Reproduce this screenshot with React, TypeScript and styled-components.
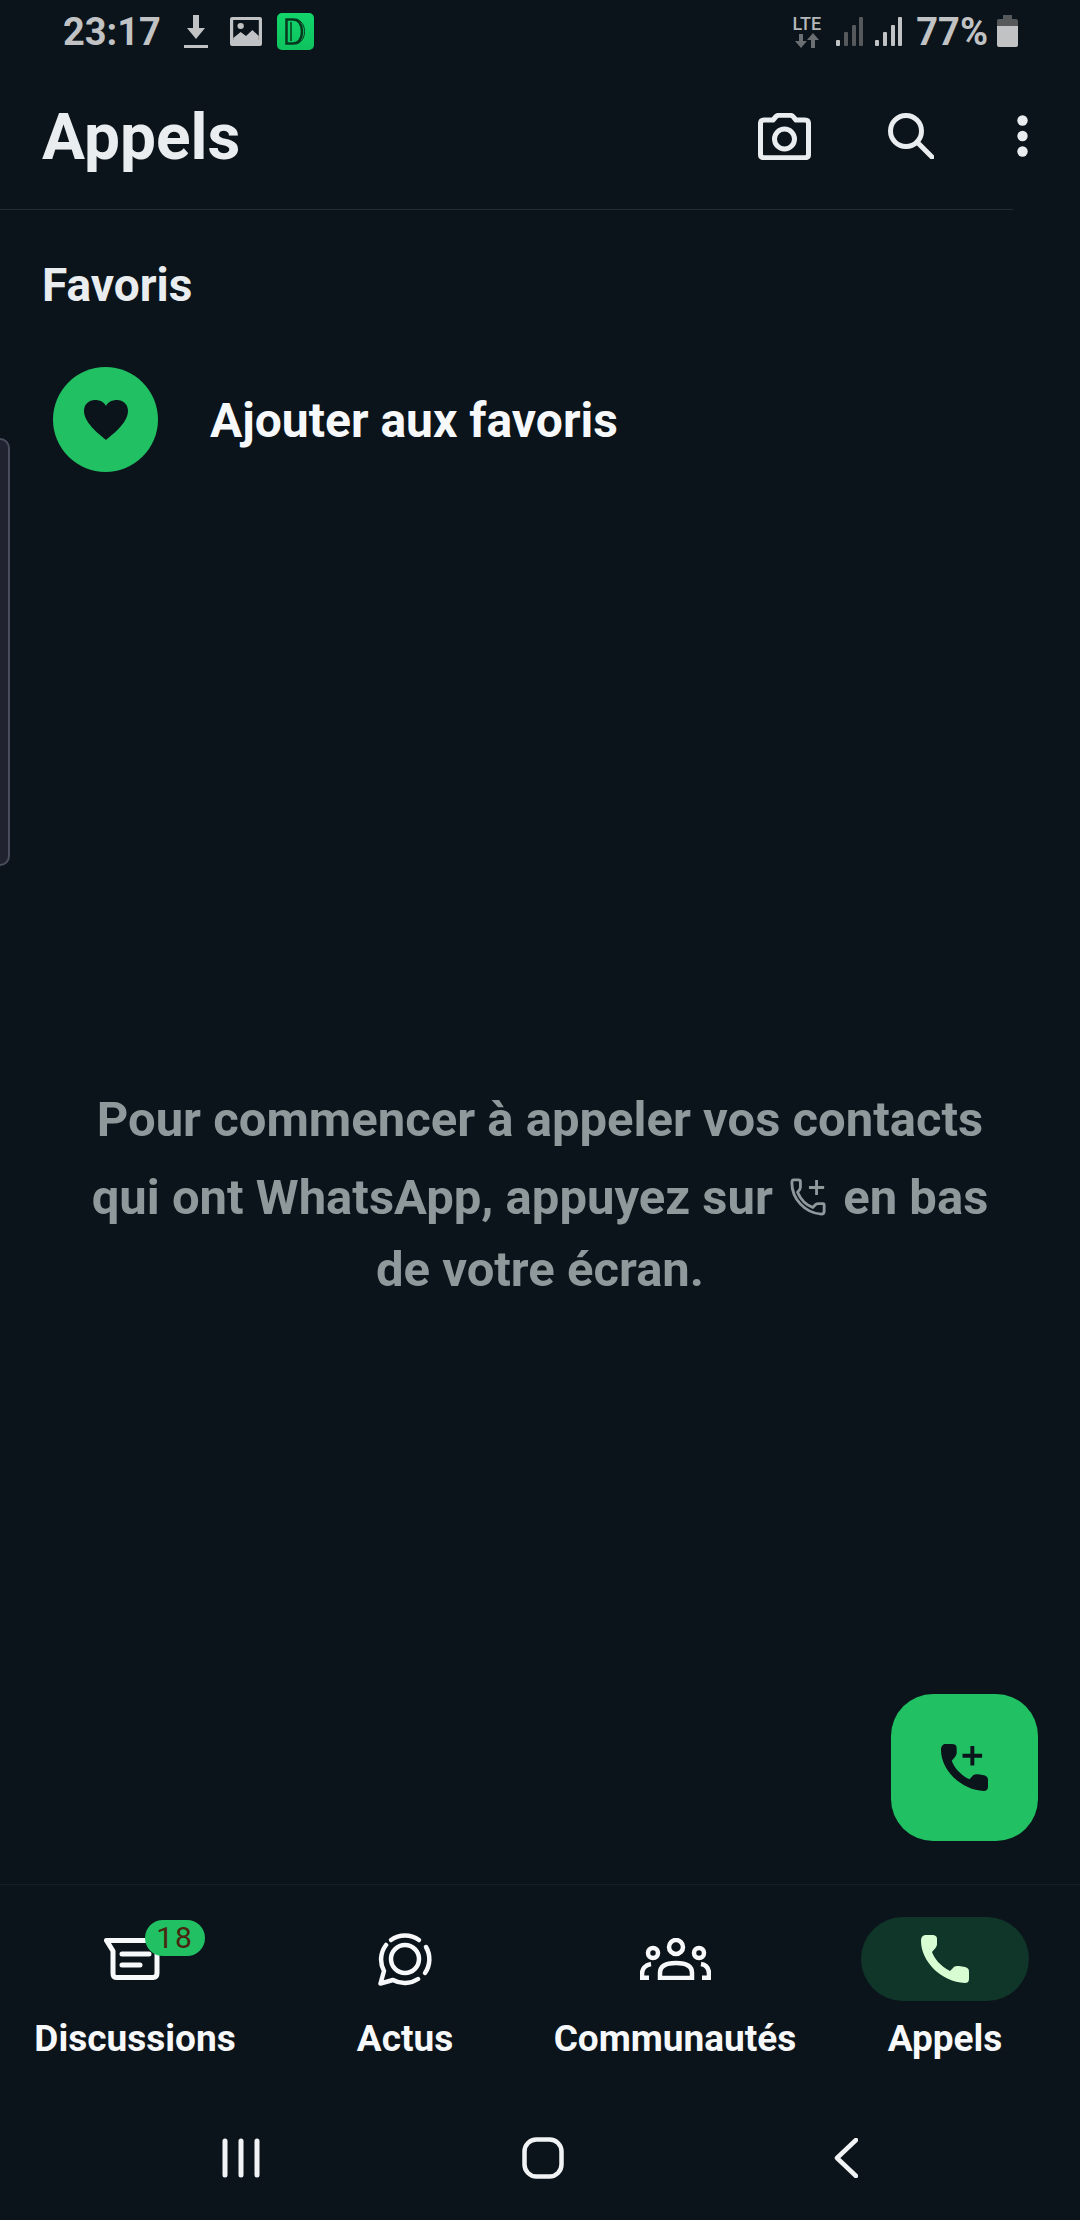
import styled, { createGlobalStyle } from 'styled-components';

const PHONE =
  'M5 0H11C14 0 16 1 16 4L16 9C16 11 15 13 11 17C13 23 19 31 29 36L32 33C33 31 36 31 38 31L44 32C47 33 48 34 48 37L48 44C48 47 46 48 44 48C20 47 0 26 0 6C0 2 2 0 5 0Z';

const GlobalStyle = createGlobalStyle`
  html, body {
    margin: 0;
    padding: 0;
    background: #0b141b;
  }
  * {
    box-sizing: border-box;
  }
`;

const Page = styled.div`
  position: relative;
  width: 1080px;
  height: 2220px;
  display: flex;
  flex-direction: column;
  overflow: hidden;
  background: #0b141b;
  font-family: Roboto, 'Liberation Sans', sans-serif;
`;

const StatusBar = styled.div`
  height: 62px;
  display: flex;
  align-items: center;
  padding: 0 62px 0 63px;
  color: #c0c2c4;
`;

const Time = styled.span`
  font-size: 38px;
  line-height: 46px;
  padding-top: 2px;
  font-weight: 700;
  margin-right: 23px;
`;

const StatusIcon = styled.svg<{ $gap?: number }>`
  display: block;
  flex: none;
  margin-right: ${(p) => p.$gap ?? 0}px;
`;

const DBadge = styled.div`
  width: 37px;
  height: 37px;
  border-radius: 5px;
  background: linear-gradient(#12d56c, #0fc35d);
  display: flex;
  align-items: center;
  justify-content: center;
`;

const StatusRight = styled.div`
  margin-left: auto;
  display: flex;
  align-items: center;
`;

const Lte = styled.div`
  width: 31px;
  margin-right: 14px;
  display: flex;
  flex-direction: column;
  align-items: center;
  gap: 1px;
  font-size: 18px;
  line-height: 17px;
  font-weight: 500;
  color: #b5b8ba;
`;

const Battery = styled.span`
  font-size: 38px;
  line-height: 46px;
  padding-top: 2px;
  font-weight: 700;
  margin: 0 9px 0 14px;
`;

const Header = styled.header`
  position: relative;
  height: 148px;
  display: flex;
  align-items: center;
  padding: 0 52px 0 41px;
  &::after {
    content: '';
    position: absolute;
    left: 0;
    bottom: 0;
    width: 1013px;
    height: 1px;
    background: #232c32;
  }
`;

const Title = styled.h1`
  margin: 3px auto 0 1px;
  font-size: 64px;
  font-weight: 700;
  color: #e9edef;
`;

const HeaderIcon = styled.svg<{ $gap: number }>`
  display: block;
  flex: none;
  margin-right: ${(p) => p.$gap}px;
  color: #e9edef;
`;

const SectionTitle = styled.h2`
  margin: 49px 0 0 42px;
  font-size: 46px;
  line-height: 52px;
  font-weight: 700;
  color: #e9edef;
`;

const FavoriteRow = styled.div`
  margin: 56px 0 0 53px;
  display: flex;
  align-items: center;
  gap: 51px;
`;

const FavoriteCircle = styled.div`
  width: 105px;
  height: 105px;
  border-radius: 50%;
  background: #21c063;
  display: flex;
  align-items: center;
  justify-content: center;
`;

const FavoriteLabel = styled.span`
  font-size: 48px;
  padding-top: 2px;
  margin-left: 1px;
  font-weight: 700;
  color: #f7f8fa;
`;

const EmptyText = styled.p`
  margin: 612px 0 0;
  font-size: 49px;
  line-height: 72px;
  font-weight: 700;
  text-align: center;
  color: #8f989b;
`;

const EmptyLine = styled.span`
  display: block;
`;

/* the top margin opens line two a little, as the inline icon does in the app */
const InlineIcon = styled.svg`
  display: inline-block;
  vertical-align: -2px;
  margin: 22px 4px 0;
`;

const SideHandle = styled.div`
  position: absolute;
  left: -10px;
  top: 438px;
  width: 20px;
  height: 428px;
  border: 2px solid #4a4d5c;
  border-radius: 10px;
  background: #20232f;
`;

const Fab = styled.div`
  position: absolute;
  left: 891px;
  top: 1694px;
  width: 147px;
  height: 147px;
  border-radius: 42px;
  background: #21c063;
  display: flex;
  align-items: center;
  justify-content: center;
`;

const BottomNav = styled.nav`
  margin-top: auto;
  display: grid;
  grid-template-columns: repeat(4, 270px);
  height: 211px;
  border-top: 1px solid #151e24;
`;

const NavItem = styled.div`
  display: flex;
  flex-direction: column;
  align-items: center;
  padding-top: 32px;
`;

const IconSlot = styled.div<{ $active?: boolean }>`
  position: relative;
  width: 168px;
  height: 84px;
  border-radius: 42px;
  display: flex;
  align-items: center;
  justify-content: center;
  color: #f7f8fa;
  background: ${(p) => (p.$active ? '#103529' : 'transparent')};
`;

const NavBadge = styled.span`
  position: absolute;
  left: 94px;
  top: 3px;
  width: 60px;
  height: 36px;
  border-radius: 18px;
  background: #21c063;
  color: #4a2510;
  font-size: 30px;
  line-height: 36px;
  letter-spacing: 2px;
  text-align: center;
`;

const NavLabel = styled.span`
  margin-top: 16px;
  font-size: 37px;
  line-height: 44px;
  font-weight: 700;
  color: #f7f8fa;
  white-space: nowrap;
`;

const GestureBar = styled.div`
  height: 125px;
  display: flex;
  align-items: center;
  color: #f1f3f4;
  padding-left: 222px;
`;

const GestureIcon = styled.svg<{ $gap: number }>`
  display: block;
  flex: none;
  margin-right: ${(p) => p.$gap}px;
`;

const App = () => (
  <Page>
    <GlobalStyle />
    <StatusBar>
      <Time>23:17</Time>
      <StatusIcon width="24" height="33" viewBox="0 0 24 33" $gap={22}>
        <path d="M9 0h6v13h6L12 24 3 13h6z" fill="currentColor" />
        <rect y="30" width="24" height="3" fill="currentColor" />
      </StatusIcon>
      <StatusIcon width="32" height="29" viewBox="0 0 30 29" preserveAspectRatio="none" $gap={15}>
        <rect width="30" height="29" rx="2" fill="currentColor" />
        <rect x="3" y="3" width="24" height="20" fill="#0b141b" />
        <circle cx="10" cy="9" r="3" fill="currentColor" />
        <path d="M3 25V21l7-6 5 4 6-6 6 6v6z" fill="currentColor" />
      </StatusIcon>
      <DBadge>
        <svg width="20" height="27" viewBox="0 0 20 27" fill="none" stroke="#06371f">
          <path d="M1.5 1.5H8C14 1.500 17 7 17 13.500S14 25.500 8 25.500H1.500Z" strokeWidth="2.500" />
          <path d="M6 4V23" strokeWidth="1.500" />
          <path d="M11 1C16 2 19.500 7 19.500 13.500S16 25 11 26" strokeWidth="1" />
        </svg>
      </DBadge>
      <StatusRight>
        <Lte>
          LTE
          <svg width="24" height="15" viewBox="0 0 24 15" fill="#6b6f72">
            <path d="M6 15L0 8h4V1h4v7h4zM18 0l6 7h-4v8h-4V7h-4z" />
          </svg>
        </Lte>
        <StatusIcon width="27" height="29" viewBox="0 0 27 29" $gap={12}>
          <rect y="23" width="4" height="6" rx="1" fill="#c0c2c4" />
          <rect x="8" y="15" width="4" height="14" rx="1" fill="#55595c" />
          <rect x="16" y="8" width="4" height="21" rx="1" fill="#55595c" />
          <rect x="23" y="0" width="4" height="29" rx="1" fill="#55595c" />
        </StatusIcon>
        <StatusIcon width="27" height="29" viewBox="0 0 27 29">
          <rect y="23" width="4" height="6" rx="1" fill="#c0c2c4" />
          <rect x="8" y="15" width="4" height="14" rx="1" fill="#c0c2c4" />
          <rect x="16" y="8" width="4" height="21" rx="1" fill="#c0c2c4" />
          <rect x="23" y="0" width="4" height="29" rx="1" fill="#c0c2c4" />
        </StatusIcon>
        <Battery>77%</Battery>
        <StatusIcon width="21" height="32" viewBox="0 0 21 32">
          <path d="M6 0h9v4h4a2 2 0 0 1 2 2v5H0V6a2 2 0 0 1 2-2h4z" fill="#55595c" />
          <path d="M0 11h21v19a2 2 0 0 1-2 2H2a2 2 0 0 1-2-2z" fill="#c0c2c4" />
        </StatusIcon>
      </StatusRight>
    </StatusBar>

    <Header>
      <Title>Appels</Title>
      <HeaderIcon width="53" height="47" viewBox="0 0 53 47" fill="none" stroke="currentColor" strokeWidth="5" $gap={77}>
        <path
          d="M2.500 10.500Q2.500 7 6 7H15L18 3.500Q19 2.300 21 2.300H32Q34 2.300 35 3.500L38 7H47Q50.500 7 50.500 10.500V41.500Q50.500 44.700 47 44.700H6Q2.500 44.700 2.500 41.500Z"
          strokeLinejoin="round"
        />
        <circle cx="26.500" cy="26" r="10" />
      </HeaderIcon>
      <HeaderIcon width="46" height="46" viewBox="0 0 46 46" fill="none" stroke="currentColor" strokeWidth="5" strokeLinecap="round" $gap={83}>
        <circle cx="18" cy="18" r="15.500" />
        <path d="M29 29L44 44" />
      </HeaderIcon>
      <HeaderIcon width="11" height="42" viewBox="0 0 11 42" fill="currentColor" $gap={0}>
        <circle cx="5.500" cy="5.500" r="5.200" />
        <circle cx="5.500" cy="21" r="5.200" />
        <circle cx="5.500" cy="36.500" r="5.200" />
      </HeaderIcon>
    </Header>

    <SectionTitle>Favoris</SectionTitle>
    <FavoriteRow>
      <FavoriteCircle>
        <svg width="44" height="40" viewBox="0 0 44 40">
          <path
            d="M22 40C19 37 0 24 0 11C0 4 5 0 11 0C16 0 20 2 22 6C24 2 28 0 33 0C39 0 44 4 44 11C44 24 25 37 22 40Z"
            fill="#0b141b"
          />
        </svg>
      </FavoriteCircle>
      <FavoriteLabel>Ajouter aux favoris</FavoriteLabel>
    </FavoriteRow>

    <EmptyText>
      <EmptyLine>Pour commencer à appeler vos contacts</EmptyLine>
      <EmptyLine>
        qui ont WhatsApp, appuyez sur{' '}
        <InlineIcon width="38" height="38" viewBox="0 0 38 40" fill="none" stroke="#8f989b" strokeWidth="3">
          <path
            d="M4 2H9Q11 2 11 4V10Q11 12 8 15C11 22 16 28 24 31L27 28Q28 27 30 27H35Q36 27 36 29V35Q36 38 33 38C16 37 2 22 2 5Q2 2 4 2Z"
            strokeLinejoin="round"
          />
          <path d="M28 2V18M20 10H36" />
        </InlineIcon>{' '}
        en bas
      </EmptyLine>
      <EmptyLine>de votre écran.</EmptyLine>
    </EmptyText>

    <SideHandle />

    <Fab>
      <svg width="47" height="47" viewBox="0 0 48 48" fill="#0b141b">
        <path d={PHONE} />
        <path d="M30 3h4v8h8v4h-8v8h-4v-8h-8v-4h8z" transform="translate(0 -1)" />
      </svg>
    </Fab>

    <BottomNav>
      <NavItem>
        <IconSlot>
          <svg width="62" height="42" viewBox="0 0 62 42" fill="none" stroke="currentColor" strokeWidth="5" strokeLinecap="round" strokeLinejoin="round">
            <path d="M2.500 2.500H53V35Q53 39.500 49 39.500H12Q9 39.500 9 35V13Z" />
            <path d="M18 16H45M18 27H36" />
          </svg>
          <NavBadge>18</NavBadge>
        </IconSlot>
        <NavLabel>Discussions</NavLabel>
      </NavItem>
      <NavItem>
        <IconSlot>
          <svg width="54" height="53" viewBox="0 0 54 53" fill="none" stroke="currentColor" strokeWidth="4.500" strokeLinecap="round" strokeLinejoin="round">
            <circle cx="27" cy="26" r="14" />
            <path d="M13 7A24 24 0 0 1 41 7" />
            <path d="M48 14A24 24 0 0 1 47 40" />
            <path d="M8 12A24 24 0 0 0 6 38L2.500 50.500L15 47A24 24 0 0 0 40 46" />
          </svg>
        </IconSlot>
        <NavLabel>Actus</NavLabel>
      </NavItem>
      <NavItem>
        <IconSlot>
          <svg width="71" height="42" viewBox="0 0 71 42" fill="none" stroke="currentColor" strokeWidth="4.500">
            <circle cx="36" cy="9" r="7" />
            <circle cx="13" cy="15" r="5" />
            <circle cx="59" cy="15" r="5" />
            <path d="M20 40V35C20 28 26 25 36 25S52 28 52 35V40Z" />
            <path d="M11 26C5 27 2 31 2 36V42" />
            <path d="M2 39.800H9M62 39.800H69" />
            <path d="M61 26C67 27 69 31 69 36V42" />
          </svg>
        </IconSlot>
        <NavLabel>Communautés</NavLabel>
      </NavItem>
      <NavItem>
        <IconSlot $active>
          <svg width="48" height="48" viewBox="0 0 48 48" fill="#d8fdd2">
            <path d={PHONE} />
          </svg>
        </IconSlot>
        <NavLabel>Appels</NavLabel>
      </NavItem>
    </BottomNav>

    <GestureBar>
      <GestureIcon width="38" height="40" viewBox="0 0 38 40" stroke="currentColor" strokeWidth="5" strokeLinecap="round" $gap={262}>
        <path d="M3 3V37M19 3V37M35 3V37" />
      </GestureIcon>
      <GestureIcon width="42" height="42" viewBox="0 0 42 42" fill="none" stroke="currentColor" strokeWidth="4.500" $gap={270}>
        <rect x="2.500" y="2.500" width="37" height="37" rx="12" />
      </GestureIcon>
      <GestureIcon width="24" height="40" viewBox="0 0 24 40" fill="none" stroke="currentColor" strokeWidth="4.500" strokeLinecap="round" strokeLinejoin="round" $gap={0}>
        <path d="M22 2L3 20L22 38" />
      </GestureIcon>
    </GestureBar>
  </Page>
);

export default App;
